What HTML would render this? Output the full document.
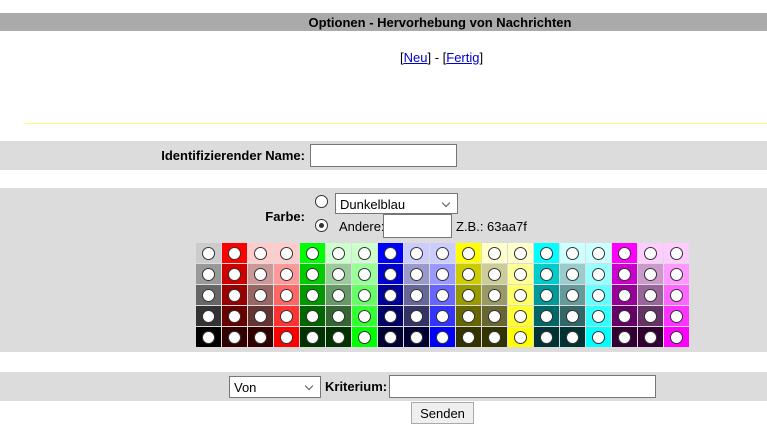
<!DOCTYPE html>
<html><head><meta charset="utf-8"><style>
*{box-sizing:border-box}
body{margin:0;width:767px;height:419px;overflow:hidden;background:#fff;font-family:"Liberation Sans",sans-serif;font-size:13px;color:#000;position:relative}
.a{position:absolute;white-space:nowrap}
.bar{left:0;width:767px;background:#dcdcdc}
.inp{position:absolute;background:#fff;border:1px solid #767676}
.sel{position:absolute;background:#fff;border:1px solid #767676;padding:3px 0 0 4px;font-size:13px}
.sel:after{content:"";position:absolute;right:8px;top:6px;width:5px;height:5px;border-right:1px solid #555;border-bottom:1px solid #555;transform:rotate(45deg)}
.grid{position:absolute;left:196px;top:243px;display:grid;grid-template-columns:repeat(19,25px);grid-auto-rows:20px;gap:1px}
.grid div{position:relative}
.grid div:after{content:"";position:absolute;left:6px;top:4px;width:13px;height:13px;border-radius:50%;background:#fff;border:1px solid #333;box-sizing:border-box}
.rad{position:absolute;width:13px;height:13px;border-radius:50%;border:1px solid #333;background:#fff}
</style></head><body>
<div class="a" style="left:0;top:13px;width:767px;height:18px;background:#aaa"></div>
<div class="a" style="left:0;top:15px;width:880px;text-align:center;font-weight:bold;font-size:13px">Optionen - Hervorhebung von Nachrichten</div>
<div class="a" style="left:400px;top:50px">[<span style="color:#00c;text-decoration:underline">Neu</span>] - [<span style="color:#00c;text-decoration:underline">Fertig</span>]</div>
<div class="a" style="left:23px;top:123px;width:744px;height:1px;background:#ffff80"></div>

<div class="a bar" style="top:141px;height:29px"></div>
<div class="a" style="right:462px;top:148px;font-weight:bold">Identifizierender Name:</div>
<div class="inp" style="left:310px;top:144px;width:147px;height:23px"></div>

<div class="a bar" style="top:188px;height:164px"></div>
<div class="a" style="right:462px;top:209px;font-weight:bold">Farbe:</div>
<div class="rad" style="left:315px;top:195px"></div>
<div class="sel" style="left:335px;top:193px;width:123px;height:21px">Dunkelblau</div>
<div class="rad" style="left:315px;top:219px"></div>
<div class="a" style="left:319px;top:223px;width:5px;height:5px;border-radius:50%;background:#333"></div>
<div class="a" style="left:339px;top:219px">Andere:</div>
<div class="inp" style="left:383px;top:214px;width:69px;height:24px"></div>
<div class="a" style="left:456px;top:219px">Z.B.: 63aa7f</div>

<div class="grid">
<div style="background:#ccc"></div><div style="background:#f00"></div><div style="background:#fcc"></div><div style="background:#fcc"></div><div style="background:#0f0"></div><div style="background:#cfc"></div><div style="background:#cfc"></div><div style="background:#00f"></div><div style="background:#ccf"></div><div style="background:#ccf"></div><div style="background:#ff0"></div><div style="background:#ffc"></div><div style="background:#ffc"></div><div style="background:#0ff"></div><div style="background:#cff"></div><div style="background:#cff"></div><div style="background:#f0f"></div><div style="background:#fcf"></div><div style="background:#fcf"></div>
<div style="background:#999"></div><div style="background:#c00"></div><div style="background:#c99"></div><div style="background:#f99"></div><div style="background:#0c0"></div><div style="background:#9c9"></div><div style="background:#9f9"></div><div style="background:#00c"></div><div style="background:#99c"></div><div style="background:#99f"></div><div style="background:#cc0"></div><div style="background:#cc9"></div><div style="background:#ff9"></div><div style="background:#0cc"></div><div style="background:#9cc"></div><div style="background:#9ff"></div><div style="background:#c0c"></div><div style="background:#c9c"></div><div style="background:#f9f"></div>
<div style="background:#666"></div><div style="background:#900"></div><div style="background:#966"></div><div style="background:#f66"></div><div style="background:#090"></div><div style="background:#696"></div><div style="background:#6f6"></div><div style="background:#009"></div><div style="background:#669"></div><div style="background:#66f"></div><div style="background:#990"></div><div style="background:#996"></div><div style="background:#ff6"></div><div style="background:#099"></div><div style="background:#699"></div><div style="background:#6ff"></div><div style="background:#909"></div><div style="background:#969"></div><div style="background:#f6f"></div>
<div style="background:#333"></div><div style="background:#600"></div><div style="background:#633"></div><div style="background:#f33"></div><div style="background:#060"></div><div style="background:#363"></div><div style="background:#3f3"></div><div style="background:#006"></div><div style="background:#336"></div><div style="background:#33f"></div><div style="background:#660"></div><div style="background:#663"></div><div style="background:#ff3"></div><div style="background:#066"></div><div style="background:#366"></div><div style="background:#3ff"></div><div style="background:#606"></div><div style="background:#636"></div><div style="background:#f3f"></div>
<div style="background:#000"></div><div style="background:#300"></div><div style="background:#300"></div><div style="background:#f00"></div><div style="background:#030"></div><div style="background:#030"></div><div style="background:#0f0"></div><div style="background:#003"></div><div style="background:#003"></div><div style="background:#00f"></div><div style="background:#330"></div><div style="background:#330"></div><div style="background:#ff0"></div><div style="background:#033"></div><div style="background:#033"></div><div style="background:#0ff"></div><div style="background:#303"></div><div style="background:#303"></div><div style="background:#f0f"></div>
</div>

<div class="a bar" style="top:372px;height:29px"></div>
<div class="sel" style="left:229px;top:376px;width:92px;height:22px">Von</div>
<div class="a" style="left:325px;top:379px;font-weight:bold">Kriterium:</div>
<div class="inp" style="left:389px;top:375px;width:267px;height:23px"></div>
<div class="a" style="left:411px;top:402px;width:63px;height:22px;background:#efefef;border:1px solid #aaa;text-align:center;padding-top:3px">Senden</div>
</body></html>
